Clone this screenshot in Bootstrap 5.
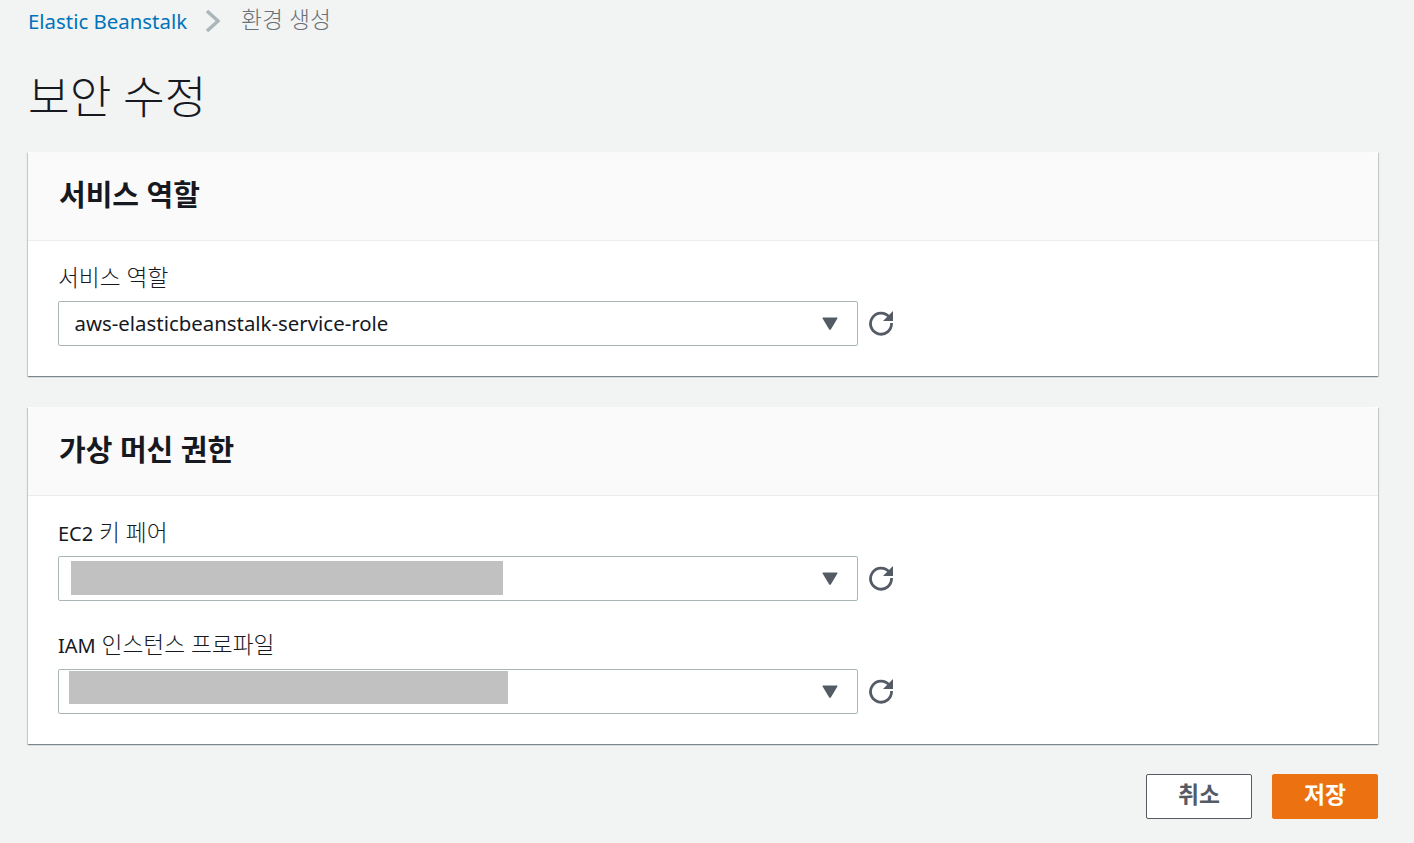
<!DOCTYPE html>
<html lang="ko">
<head>
<meta charset="utf-8">
<title>보안 수정</title>
<link href="https://cdn.jsdelivr.net/npm/bootstrap@5.3.0/dist/css/bootstrap.min.css" rel="stylesheet">
<style>
html,body{height:100%}
body{background:#f2f3f3;color:#16191f;font-family:"Noto Sans","Noto Sans CJK KR",sans-serif;font-size:18px;line-height:1.4;overflow:hidden}
.pg{padding:0 36px 0 28px}
.crumbs{height:42px;font-size:20.4px;color:#687078}
.crumbs a{color:#0073bb;text-decoration:none}
.crumb-cur{font-size:22.8px;font-weight:300;position:relative;top:-1px}
.chev{margin:0 21px 0 18px}
.pg-title{font-size:45.3px;font-weight:300;line-height:60px;margin:25px 0 25px;height:60px}
.pane{border:0;border-radius:0;box-shadow:0 1px 1px 0 rgba(0,28,36,.3),1px 1px 1px 0 rgba(0,28,36,.15),-1px 1px 1px 0 rgba(0,28,36,.15);margin-bottom:31px;background:#fff}
.pane+.actions{margin-top:-1px}
.pane-head{background:#fafafa;border-bottom:1px solid #eaeded;border-radius:0;padding:0 30px 4px 31px;height:89px;display:flex;align-items:center}
.pane-head h2{font-size:29px;font-weight:700;margin:0;line-height:1;color:#16191f}
.pane-body{padding:20px 30px 30px}
.fld+.fld{margin-top:29px}
.fld-label{display:block;font-size:22.7px;font-weight:300;line-height:30px;margin:2px 0 10px;height:28px}
.fld+.fld .fld-label{margin-bottom:11px}
.fld-label span{font-size:20px;font-weight:400}
.pick-row{display:flex;align-items:center;gap:10px}
.pick{width:800px;height:45px;padding:0 19px 0 15.5px;border:1px solid #aab7b8;border-radius:2px;background:#fff;font-size:20.4px;display:flex;align-items:center;justify-content:space-between;color:#16191f}
.mask{background:#c1c1c1;height:34px;align-self:flex-start}
.m1{width:432px;margin:4px 0 0 -3.5px}
.m2{width:439px;margin:1px 0 0 -5.5px;height:33px}
.tri{width:16px;height:13px;flex:none}
.spin{width:26px;height:26px;flex:none;margin-bottom:2px}
.actions{display:flex;justify-content:flex-end;gap:20px}
.act{width:106px;height:45px;padding:0 0 3px;font-size:22.8px;font-weight:700;border-radius:2px;line-height:1}
.act-plain{background:#fff;border:1px solid #545b64;color:#545b64}
.act-main{background:#ec7211;border:1px solid #ec7211;color:#fff}
</style>
</head>
<body>
<div class="pg">
  <nav class="crumbs d-flex align-items-center">
    <a href="#">Elastic Beanstalk</a>
    <svg class="chev" width="15" height="24" viewBox="0 0 15 24"><path d="M2 2 L13 12 L2 22" fill="none" stroke="#aab7b8" stroke-width="3.4"/></svg>
    <span class="crumb-cur">환경 생성</span>
  </nav>
  <h1 class="pg-title">보안 수정</h1>

  <section class="card pane">
    <div class="card-header pane-head"><h2>서비스 역할</h2></div>
    <div class="card-body pane-body">
      <div class="fld">
        <label class="fld-label">서비스 역할</label>
        <div class="pick-row">
          <div class="pick"><span>aws-elasticbeanstalk-service-role</span>
            <svg class="tri" viewBox="0 0 16 13"><path d="M1 .5H15Q16 .5 15.4 1.6L8.8 12.4Q8 13.2 7.2 12.4L.6 1.6Q0 .5 1 .5Z" fill="#545b64"/></svg></div>
          <svg class="spin" viewBox="0 0 26 26"><path d="M21.5 7.5A10.5 10.5 0 1 0 23.5 13" fill="none" stroke="#545b64" stroke-width="2.8"/><path d="M25 1V11H15Z" fill="#545b64"/></svg>
        </div>
      </div>
    </div>
  </section>

  <section class="card pane">
    <div class="card-header pane-head"><h2>가상 머신 권한</h2></div>
    <div class="card-body pane-body">
      <div class="fld">
        <label class="fld-label"><span>EC2</span> 키 페어</label>
        <div class="pick-row">
          <div class="pick"><div class="mask m1"></div>
            <svg class="tri" viewBox="0 0 16 13"><path d="M1 .5H15Q16 .5 15.4 1.6L8.8 12.4Q8 13.2 7.2 12.4L.6 1.6Q0 .5 1 .5Z" fill="#545b64"/></svg></div>
          <svg class="spin" viewBox="0 0 26 26"><path d="M21.5 7.5A10.5 10.5 0 1 0 23.5 13" fill="none" stroke="#545b64" stroke-width="2.8"/><path d="M25 1V11H15Z" fill="#545b64"/></svg>
        </div>
      </div>
      <div class="fld">
        <label class="fld-label"><span>IAM</span> 인스턴스 프로파일</label>
        <div class="pick-row">
          <div class="pick"><div class="mask m2"></div>
            <svg class="tri" viewBox="0 0 16 13"><path d="M1 .5H15Q16 .5 15.4 1.6L8.8 12.4Q8 13.2 7.2 12.4L.6 1.6Q0 .5 1 .5Z" fill="#545b64"/></svg></div>
          <svg class="spin" viewBox="0 0 26 26"><path d="M21.5 7.5A10.5 10.5 0 1 0 23.5 13" fill="none" stroke="#545b64" stroke-width="2.8"/><path d="M25 1V11H15Z" fill="#545b64"/></svg>
        </div>
      </div>
    </div>
  </section>

  <div class="actions">
    <button type="button" class="btn act act-plain">취소</button>
    <button type="button" class="btn act act-main">저장</button>
  </div>
</div>
<script src="https://cdn.jsdelivr.net/npm/bootstrap@5.3.0/dist/js/bootstrap.bundle.min.js"></script>
</body>
</html>
